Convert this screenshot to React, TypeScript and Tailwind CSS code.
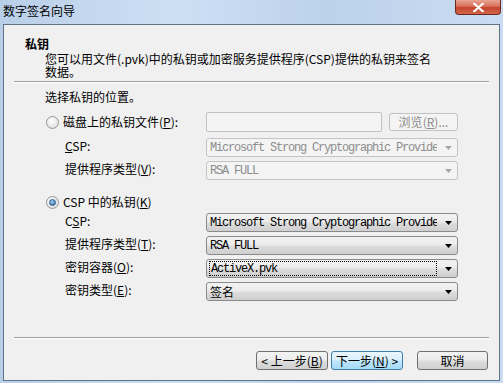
import type { ReactNode } from 'react'

const cjk = "font-['Noto_Sans_CJK_SC',sans-serif] text-[12px]"
const mono = "font-['Liberation_Mono',monospace] text-[12px] tracking-[-1.2px]"
const btnFace =
	'bg-[linear-gradient(180deg,#f3f3f3_0%,#ebebeb_48%,#dddddd_52%,#cfcfcf_100%)]'

function Key({ k }: { k: string }) {
	return (
		<span>
			(<u>{k}</u>)
		</span>
	)
}

function Radio({ checked }: { checked?: boolean }) {
	return (
		<span className="flex h-[13px] w-[13px] shrink-0 items-center justify-center rounded-full border border-[#979797] bg-[radial-gradient(circle_at_40%_35%,#ffffff,#d6d6d6)]">
			{checked && (
				<span className="h-[7px] w-[7px] rounded-full border border-[#2c5f8f] bg-[radial-gradient(circle_at_40%_35%,#a8d4f4,#1e5b98)]" />
			)}
		</span>
	)
}

function Combo({
	children,
	disabled,
	focus,
}: {
	children: ReactNode
	disabled?: boolean
	focus?: boolean
}) {
	return (
		<div
			className={`flex h-[19px] w-[252px] items-center rounded-[3px] border pl-[2px] pr-[5px] ${
				disabled
					? 'border-[#c4c4c4] bg-[#f4f4f4] text-[#8d8d8d]'
					: `border-[#8a8a8a] ${btnFace} text-black`
			}`}
		>
			<div
				className={`flex h-[15px] flex-1 items-center overflow-hidden whitespace-nowrap pl-[1px] ${
					focus ? 'border border-dotted border-black' : ''
				}`}
			>
				{children}
			</div>
			<svg width="7" height="4" viewBox="0 0 7 4" className="ml-[8px] shrink-0">
				<path d="M0 0h7L3.5 4z" fill={disabled ? '#a8a8a8' : '#000'} />
			</svg>
		</div>
	)
}

function Row({ label, children, className = '' }: { label: ReactNode; children: ReactNode; className?: string }) {
	return (
		<div className={`flex h-[19px] items-center ${className}`}>
			<div className={`w-[202px] pb-[3px] pl-[61px] leading-[12px] ${cjk}`}>{label}</div>
			{children}
		</div>
	)
}

function Separator({ className = '' }: { className?: string }) {
	return <div className={`ml-[10px] h-[2px] w-[475px] border-t border-b border-t-[#a0a0a0] border-b-white ${className}`} />
}

export default function App() {
	return (
		<div className="flex h-[383px] w-[503px] flex-col overflow-hidden bg-[linear-gradient(90deg,#b9cfe8_0%,#cddff3_35%,#bcd2eb_65%,#c9dcf1_100%)] text-black">
			<div className="flex h-[24px] shrink-0 items-start justify-between pl-[3px] pr-[2px]">
				<span className={`mt-[5px] leading-[12px] ${cjk}`}>数字签名向导</span>
				<div className="flex h-[15px] w-[46px] items-center justify-center rounded-b-[4px] border border-t-0 border-[#6b2a20] bg-[linear-gradient(180deg,#e9a592_0%,#d8705b_45%,#c4442c_55%,#d2664c_100%)]">
					<svg width="11" height="9" viewBox="0 0 11 9">
						<path d="M1 0.5l9 8M10 0.5l-9 8" stroke="#fff" strokeWidth="2.2" strokeLinecap="round" />
					</svg>
				</div>
			</div>

			<div className={`mx-[3px] mb-[2px] flex flex-1 flex-col border border-[#5f7288] bg-[#f0f0f0] ${cjk}`}>
				<div className="mt-[13px] h-[12px] pl-[21px] font-bold leading-[12px]">私钥</div>
				<div className="mt-[2px] whitespace-nowrap pl-[41px] leading-[13px]">
					您可以用文件(.pvk)中的私钥或加密服务提供程序(CSP)提供的私钥来签名
					<br />
					数据。
				</div>
				<Separator className="mt-[3px]" />
				<div className="mt-[8px] h-[12px] pl-[41px] leading-[12px]">选择私钥的位置。</div>

				<div className="mt-[9px] flex h-[20px] items-center">
					<div className="flex w-[202px] items-center pl-[42px]">
						<Radio />
						<span className="ml-[4px] leading-[12px]">
							磁盘上的私钥文件<Key k="P" />:
						</span>
					</div>
					<div className="h-[20px] w-[176px] rounded-[2px] border border-[#c2c2c2] bg-[#f4f4f4]" />
					<div className="ml-[7px] flex h-[18px] w-[69px] items-center justify-center rounded-[3px] border border-[#c2c2c2] bg-[#f4f4f4] leading-[12px] text-[#8d8d8d]">
						浏览<Key k="R" />...
					</div>
				</div>

				<Row className="mt-[6px]" label={<><u>C</u>SP:</>}>
					<Combo disabled>
						<span className={mono}>Microsoft Strong Cryptographic Provide</span>
					</Combo>
				</Row>
				<Row className="mt-[4px]" label={<>提供程序类型<Key k="V" />:</>}>
					<Combo disabled>
						<span className={mono}>RSA FULL</span>
					</Combo>
				</Row>

				<div className="mt-[12px] flex h-[20px] items-center pl-[42px]">
					<Radio checked />
					<span className="ml-[4px] leading-[12px]">
						CSP 中的私钥<Key k="K" />
					</span>
				</div>

				<Row className="mt-[1px]" label={<>C<u>S</u>P:</>}>
					<Combo>
						<span className={mono}>Microsoft Strong Cryptographic Provide</span>
					</Combo>
				</Row>
				<Row className="mt-[4px]" label={<>提供程序类型<Key k="T" />:</>}>
					<Combo>
						<span className={mono}>RSA FULL</span>
					</Combo>
				</Row>
				<Row className="mt-[4px]" label={<>密钥容器<Key k="O" />:</>}>
					<Combo focus>
						<span className={mono}>ActiveX.pvk</span>
					</Combo>
				</Row>
				<Row className="mt-[4px]" label={<>密钥类型<Key k="E" />:</>}>
					<Combo>
						<span className="leading-[12px]">签名</span>
					</Combo>
				</Row>

				<Separator className="mt-[36px]" />

				<div className="mt-[12px] flex justify-end gap-[3px] pr-[11px]">
					<button className={`h-[19px] w-[72px] rounded-[3px] border border-[#707070] ${btnFace} leading-[12px]`}>
						&lt; 上一步<Key k="B" />
					</button>
					<button className="h-[19px] w-[72px] rounded-[3px] border border-[#3c7fb1] bg-[linear-gradient(180deg,#eaf6fd_0%,#d9f0fc_48%,#bee6fd_52%,#a7d9f5_100%)] leading-[12px]">
						下一步<Key k="N" /> &gt;
					</button>
					<button className={`ml-[11px] h-[19px] w-[71px] rounded-[3px] border border-[#707070] ${btnFace} leading-[12px]`}>
						取消
					</button>
				</div>
			</div>
		</div>
	)
}
